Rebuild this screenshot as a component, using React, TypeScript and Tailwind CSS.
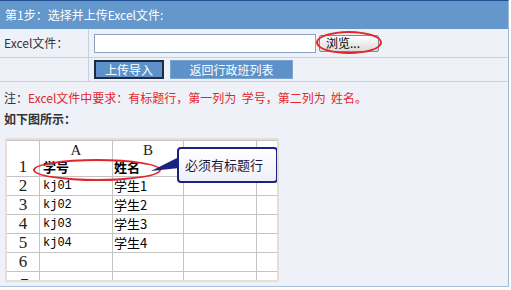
import React from 'react';

const cjk = "font-['Noto_Sans_CJK_SC','Noto_Sans',sans-serif]";

const rows = [
  { n: '2', a: 'kj01', b: '学生1' },
  { n: '3', a: 'kj02', b: '学生2' },
  { n: '4', a: 'kj03', b: '学生3' },
  { n: '5', a: 'kj04', b: '学生4' },
  { n: '6', a: '', b: '' },
];

function Sheet() {
  const cell = 'border-r border-b border-[#c4c4c4] h-[19px] flex items-center';
  return (
    <div className="relative ml-[5px] w-[274px] h-[144px] border-2 border-[#e8ded8] bg-white overflow-hidden">
      <div className="grid grid-cols-[33px_73px_71px_73px_20px] border-t border-[#c4c4c4]">
        {/* column header */}
        <div className="border-r border-[#c4c4c4] h-[17px]" />
        <div className="border-r border-[#c4c4c4] h-[17px] flex items-end justify-center font-['Liberation_Serif',serif] text-[15px] leading-none text-[#222]">A</div>
        <div className="border-r border-[#c4c4c4] h-[17px] flex items-end justify-center font-['Liberation_Serif',serif] text-[15px] leading-none text-[#222]">B</div>
        <div className="border-r border-[#c4c4c4] h-[17px]" />
        <div className="h-[17px]" />
        {/* row 1 */}
        <div className={`${cell} justify-center font-['Liberation_Serif',serif] text-[17px] text-[#222]`}>1</div>
        <div className={`${cell} pl-[3px] ${cjk} font-bold text-[13px] text-black`}>学号</div>
        <div className={`${cell} pl-[1px] ${cjk} font-bold text-[13px] text-black`}>姓名</div>
        <div className={cell} />
        <div className="border-b border-[#c4c4c4] h-[19px]" />
        {rows.map((r) => (
          <React.Fragment key={r.n}>
            <div className={`${cell} justify-center font-['Liberation_Serif',serif] text-[17px] text-[#222]`}>{r.n}</div>
            <div className={`${cell} pl-[3px] font-['Liberation_Mono',monospace] text-[12px] text-black`}>{r.a}</div>
            <div className={`${cell} pl-[1px] ${cjk} text-[13px] text-black`}>{r.b}</div>
            <div className={cell} />
            <div className="border-b border-[#c4c4c4] h-[19px]" />
          </React.Fragment>
        ))}
        <div className="border-r border-[#c4c4c4] h-[8px] overflow-hidden pl-[13px] font-['Liberation_Serif',serif] text-[17px] text-[#222] leading-none pt-[4px]">7</div>
        <div className="border-r border-[#c4c4c4] h-[8px]" />
        <div className="border-r border-[#c4c4c4] h-[8px]" />
        <div className="border-r border-[#c4c4c4] h-[8px]" />
        <div className="h-[8px]" />
      </div>

      {/* red ellipse round header row */}
      <div className="absolute left-[26px] top-[19px] w-[128px] h-[22px] rounded-[50%] border-2 border-[#e3262b]" />

      {/* callout */}
      <svg className="absolute left-[140px] top-[14px]" width="40" height="30" viewBox="0 0 40 30">
        <polygon points="32,3 32,14 4,17" fill="#1d2180" />
      </svg>
      <div className={`absolute left-[170px] top-[7px] w-[101px] h-[36px] rounded-[4px] border-2 border-[#1d2180] bg-gradient-to-b from-white to-[#eef0fa] flex items-center pl-[6px] ${cjk} text-[13px] text-[#1a1a40]`}>
        必须有标题行
      </div>
    </div>
  );
}

export default function App() {
  return (
    <div className="w-[511px] h-[290px] bg-white overflow-hidden">
      <div className={`w-[509px] h-[287px] bg-[#eef2f8] border-t border-t-[#1f4f90] border-r border-r-[#9fb8d6] border-b border-b-[#a9c0dc] ${cjk} text-[12px]`}>
        <div className="h-[28px] bg-[#6498cc] text-white flex items-center pl-[5px]">第1步：选择并上传Excel文件:</div>

        <div className="flex h-[29px] border-b border-[#c7d0de]">
          <div className="w-[89px] border-r border-[#c7d0de] flex items-center pl-[4px] text-[#333]">Excel文件：</div>
          <div className="flex items-center pl-[5px] gap-[3px]">
            <div className="w-[222px] h-[19px] border border-[#8aa2bf] bg-white" />
            <div className="relative">
              <button className="w-[60px] h-[17px] border border-[#7a8aa0] rounded-[2px] bg-gradient-to-b from-white to-[#dcdcdc] text-black text-[12px] leading-none text-left pl-[6px]">浏览...</button>
              <div className="absolute -left-[3px] -top-[3px] w-[66px] h-[23px] rounded-[50%] border-2 border-[#e3262b]" />
            </div>
          </div>
        </div>

        <div className="flex h-[24px] border-b border-[#c7d0de]">
          <div className="w-[89px] border-r border-[#c7d0de]" />
          <div className="flex items-center pl-[5px] gap-[6px]">
            <button className="w-[70px] h-[19px] bg-[#5d91ca] border-2 border-[#1e2b44] text-white text-[12px] leading-none">上传导入</button>
            <button className="w-[123px] h-[19px] bg-[#5d91ca] border border-[#7fa4cf] text-white text-[12px] leading-none">返回行政班列表</button>
          </div>
        </div>

        <div className="pl-[4px] pt-[4px] h-[28px] flex items-center">
          <span className="text-[#333]">注：</span>
          <span className="text-[#e3262b] whitespace-pre">Excel文件中要求：有标题行，第一列为  学号，第二列为  姓名。</span>
        </div>
        <div className="pl-[4px] h-[18px] flex items-center font-bold text-[#333]">如下图所示：</div>

        <div className="pt-[10px]">
          <Sheet />
        </div>
      </div>
    </div>
  );
}
